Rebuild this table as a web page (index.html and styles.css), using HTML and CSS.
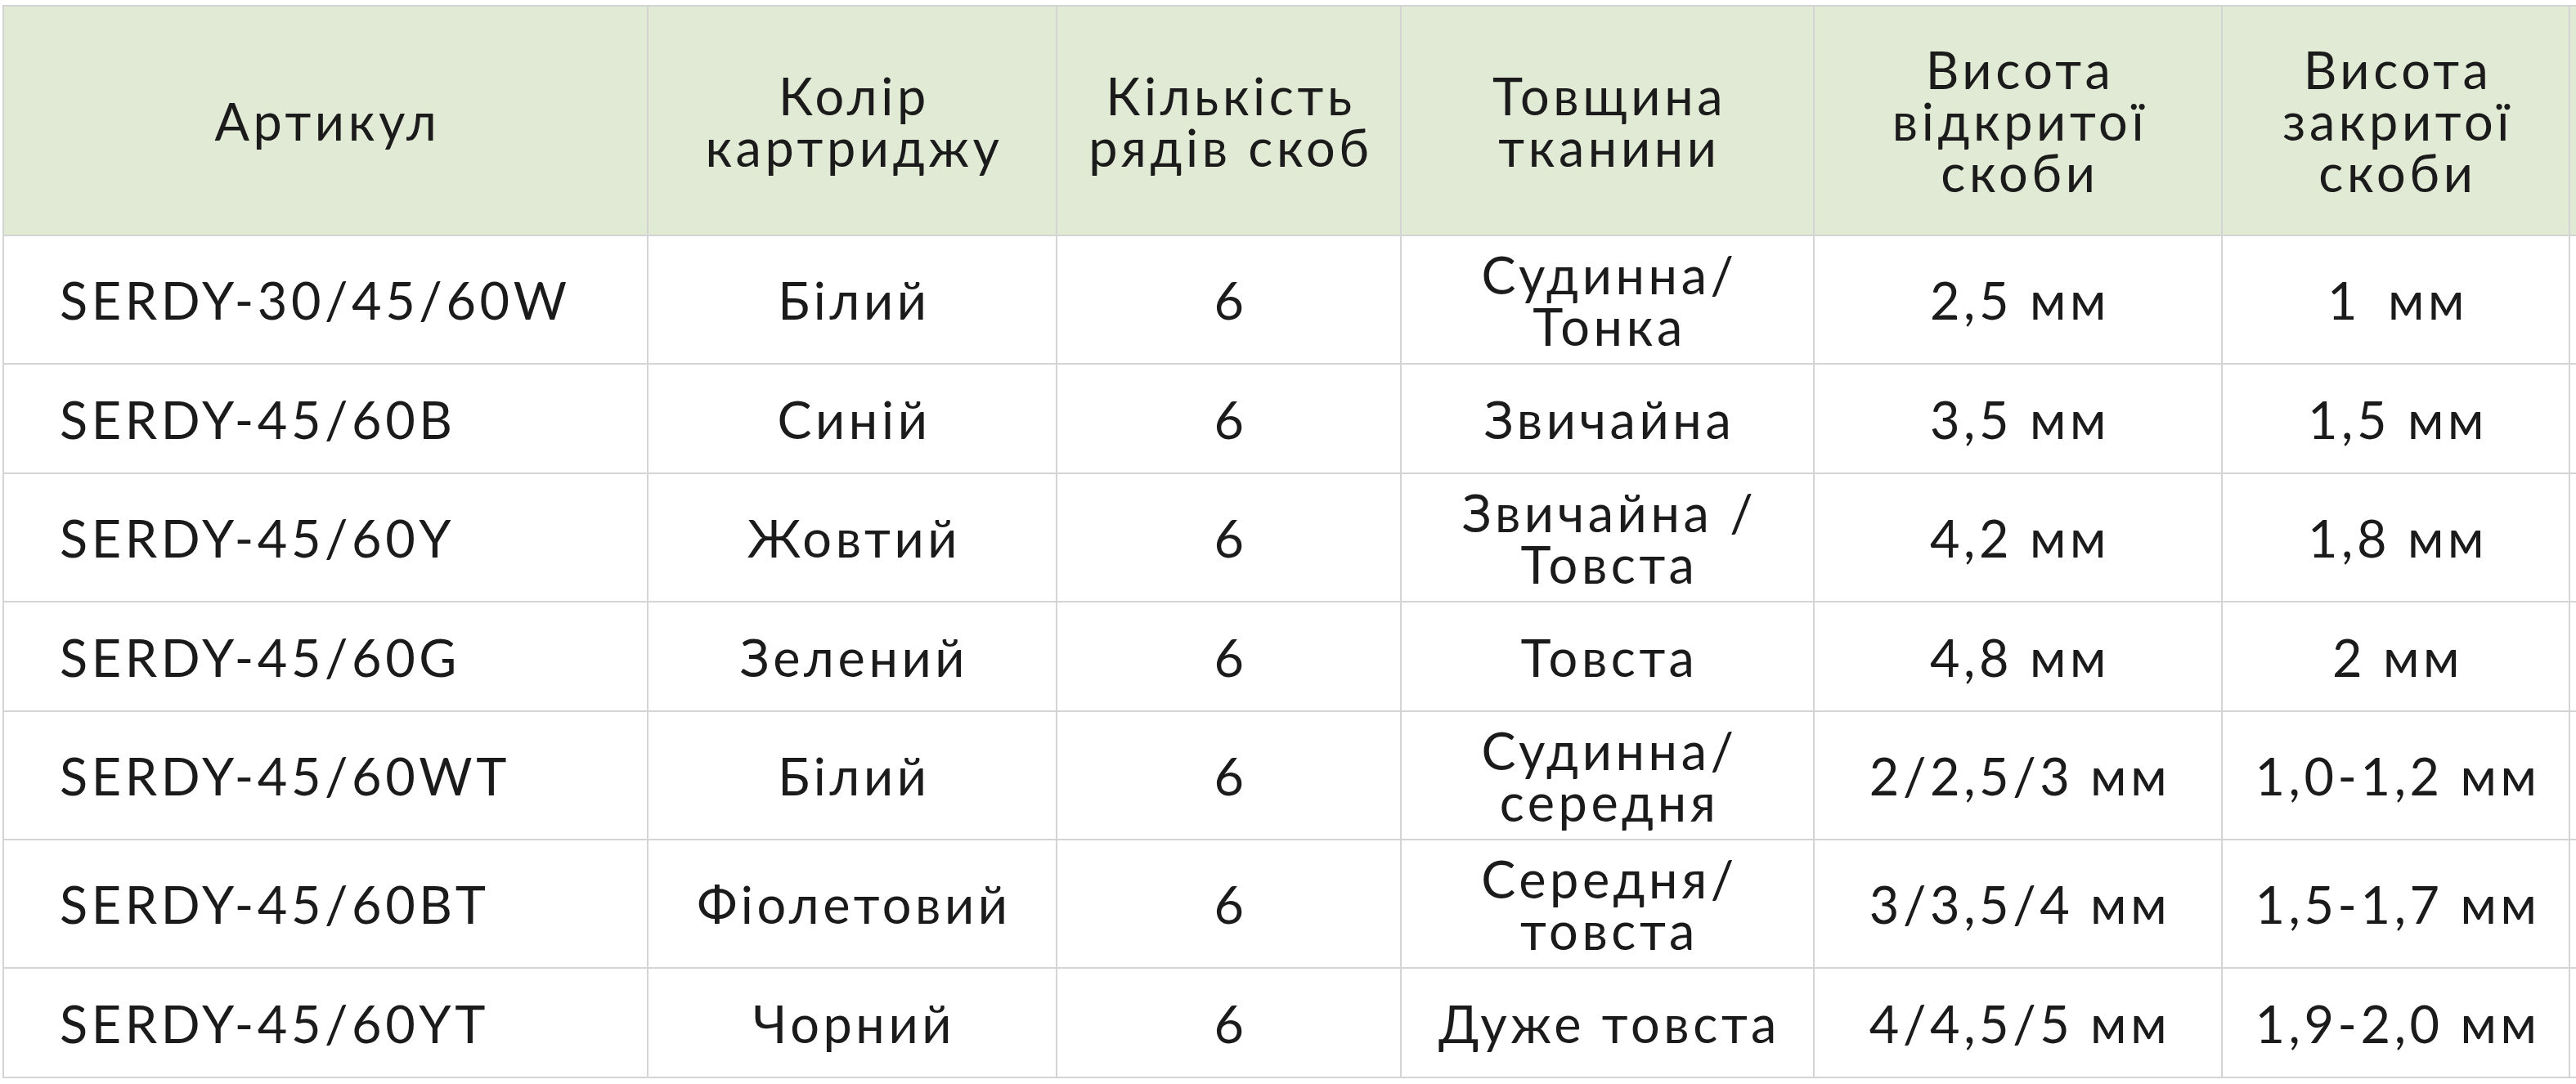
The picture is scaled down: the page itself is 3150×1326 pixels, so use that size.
FILE: index.html
```html
<!DOCTYPE html>
<html lang="uk">
<head>
<meta charset="utf-8">
<title>Картриджі SERDY</title>
<link rel="stylesheet" href="styles.css">
</head>
<body>
<div class="wrap">
<table class="spec">
  <colgroup>
    <col class="c1"><col class="c2"><col class="c3"><col class="c4"><col class="c5"><col class="c6"><col class="c7">
  </colgroup>
  <thead>
    <tr>
      <th>Артикул</th>
      <th>Колір<br>картриджу</th>
      <th>Кількість<br>рядів скоб</th>
      <th>Товщина<br>тканини</th>
      <th>Висота<br>відкритої<br>скоби</th>
      <th>Висота<br>закритої<br>скоби</th>
      <th></th>
    </tr>
  </thead>
  <tbody>
    <tr class="tall">
      <td class="sku">SERDY-30/45/60W</td><td>Білий</td><td>6</td><td>Судинна/<br>Тонка</td><td>2,5 мм</td><td>1 <span class="unit-gap">мм</span></td><td></td>
    </tr>
    <tr>
      <td class="sku">SERDY-45/60B</td><td>Синій</td><td>6</td><td>Звичайна</td><td>3,5 мм</td><td>1,5 мм</td><td></td>
    </tr>
    <tr class="tall">
      <td class="sku">SERDY-45/60Y</td><td>Жовтий</td><td>6</td><td>Звичайна /<br>Товста</td><td>4,2 мм</td><td>1,8 мм</td><td></td>
    </tr>
    <tr>
      <td class="sku">SERDY-45/60G</td><td>Зелений</td><td>6</td><td>Товста</td><td>4,8 мм</td><td>2 мм</td><td></td>
    </tr>
    <tr class="tall">
      <td class="sku">SERDY-45/60WT</td><td>Білий</td><td>6</td><td>Судинна/<br>середня</td><td>2/2,5/3 мм</td><td>1,0-1,2 мм</td><td></td>
    </tr>
    <tr class="tall">
      <td class="sku">SERDY-45/60BT</td><td>Фіолетовий</td><td>6</td><td>Середня/<br>товста</td><td>3/3,5/4 мм</td><td>1,5-1,7 мм</td><td></td>
    </tr>
    <tr>
      <td class="sku">SERDY-45/60YT</td><td>Чорний</td><td>6</td><td>Дуже товста</td><td>4/4,5/5 мм</td><td>1,9-2,0 мм</td><td></td>
    </tr>
  </tbody>
</table>
</div>
</body>
</html>
```
FILE: styles.css
```css
html, body {
  margin: 0;
  padding: 0;
  background: #ffffff;
}
body {
  overflow: hidden;
  font-family: Lato, "Liberation Sans", sans-serif;
  color: #1b1b1b;
}
.wrap {
  padding: 6px 0 0 3px;
  width: 3600px;
}
.spec {
  border-collapse: collapse;
  table-layout: fixed;
  width: 3445px;
  font-size: 63px;
  letter-spacing: 4.6px;
  line-height: 63px;
}
.c1 { width: 788px; }
.c2 { width: 500px; }
.c3 { width: 421px; }
.c4 { width: 505px; }
.c5 { width: 499px; }
.c6 { width: 425px; }
.c7 { width: 307px; }
.spec th, .spec td {
  border: 2px solid #d4d4d4;
  text-align: center;
  vertical-align: middle;
  padding: 0 4px 0 9px;
}
.spec th {
  background: #e1ead4;
  font-weight: 400;
  height: 279px;
}
.spec td {
  height: 132px;
}
.spec tr.tall td {
  height: 155px;
}
.spec td.sku {
  text-align: left;
  padding-left: 68px;
}
.unit-gap {
  margin-left: 12px;
}
```
